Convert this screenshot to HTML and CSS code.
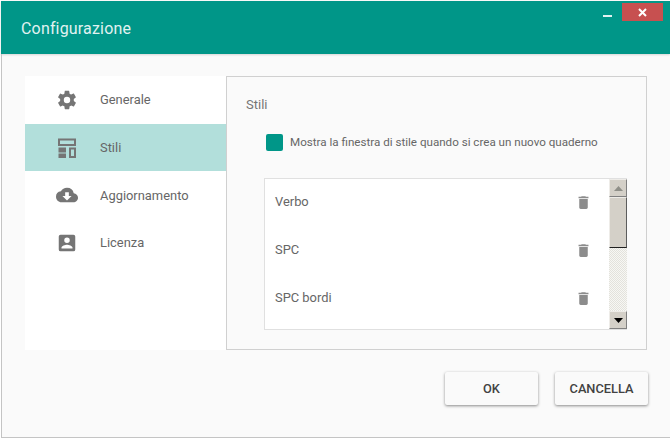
FILE: index.html
```html
<!DOCTYPE html>
<html lang="it">
<head>
<meta charset="utf-8">
<title>Configurazione</title>
<link rel="stylesheet" href="styles.css">
</head>
<body>
<div class="window">
  <header class="titlebar">
    <h1 class="title">Configurazione</h1>
    <div class="controls">
      <span class="minimize"></span>
      <span class="close">
        <svg width="9" height="9" viewBox="0 0 9 9"><path d="M1 1l7 7M8 1l-7 7" stroke="#fff" stroke-width="2" fill="none"/></svg>
      </span>
    </div>
  </header>
  <main class="content">
    <div class="columns">
      <nav class="sidebar">
        <div class="nav-item">
          <svg class="nav-icon" width="22" height="22" viewBox="0 0 24 24"><path fill="#757575" d="M19.4 13c.04-.32.07-.66.07-1s-.03-.68-.07-1l2.11-1.65c.19-.15.24-.42.12-.64l-2-3.46c-.12-.22-.39-.3-.61-.22l-2.49 1c-.52-.4-1.08-.73-1.69-.98l-.38-2.65A.49.49 0 0 0 14 2h-4c-.25 0-.46.18-.49.42l-.38 2.65c-.61.25-1.17.59-1.69.98l-2.49-1c-.23-.09-.49 0-.61.22l-2 3.46c-.13.22-.07.49.12.64L4.57 11c-.04.32-.07.67-.07 1s.03.68.07 1l-2.11 1.65c-.19.15-.24.42-.12.64l2 3.46c.12.22.39.3.61.22l2.49-1c.52.4 1.08.73 1.69.98l.38 2.65c.03.24.24.42.49.42h4c.25 0 .46-.18.49-.42l.38-2.65c.61-.25 1.17-.59 1.69-.98l2.49 1c.23.09.49 0 .61-.22l2-3.46c.12-.22.07-.49-.12-.64L19.4 13zM12 15.500a3.500 3.500 0 1 1 0-7 3.500 3.500 0 0 1 0 7z"/></svg>
          <span class="nav-label">Generale</span>
        </div>
        <div class="nav-item active">
          <svg class="nav-icon" width="22" height="22" viewBox="0 0 22 22"><path fill="#757575" fill-rule="evenodd" d="M2 1.500h18v7.500H2zM4 3.500v3.500h14V3.500zM2.500 10.500H10v5H2.500zM2.500 16.500H10V21H2.500zM13 10.500h7V21h-7zM15 12.500V19h3v-6.500z"/></svg>
          <span class="nav-label">Stili</span>
        </div>
        <div class="nav-item">
          <svg class="nav-icon" width="22" height="22" viewBox="0 0 24 24"><path fill="#757575" d="M19.35 10.04A7.49 7.49 0 0 0 12 4a7.48 7.48 0 0 0-6.65 4.04A5.99 5.99 0 0 0 0 14c0 3.31 2.69 6 6 6h13c2.76 0 5-2.24 5-5 0-2.64-2.05-4.78-4.65-4.96zM17 13l-5 5-5-5h3V9h4v4h3z"/></svg>
          <span class="nav-label">Aggiornamento</span>
        </div>
        <div class="nav-item">
          <svg class="nav-icon" width="22" height="22" viewBox="0 0 24 24"><path fill="#757575" d="M3 5v14a2 2 0 0 0 2 2h14a2 2 0 0 0 2-2V5a2 2 0 0 0-2-2H5a2 2 0 0 0-2 2zm12 4a3 3 0 1 1-6 0 3 3 0 0 1 6 0zm-9 8c0-2 4-3.100 6-3.100s6 1.100 6 3.100v1H6v-1z"/></svg>
          <span class="nav-label">Licenza</span>
        </div>
      </nav>
      <section class="panel">
        <h2 class="panel-title">Stili</h2>
        <div class="check-row">
          <span class="checkbox"></span>
          <span class="check-label">Mostra la finestra di stile quando si crea un nuovo quaderno</span>
        </div>
        <div class="list-box">
          <ul class="list">
            <li class="list-row"><span>Verbo</span><svg class="trash" width="17" height="17" viewBox="0 0 24 24"><path fill="#8c8c8c" d="M6 19c0 1.100.9 2 2 2h8c1.100 0 2-.9 2-2V7H6v12zM19 4h-3.500l-1-1h-5l-1 1H5v2h14V4z"/></svg></li>
            <li class="list-row"><span>SPC</span><svg class="trash" width="17" height="17" viewBox="0 0 24 24"><path fill="#8c8c8c" d="M6 19c0 1.100.9 2 2 2h8c1.100 0 2-.9 2-2V7H6v12zM19 4h-3.500l-1-1h-5l-1 1H5v2h14V4z"/></svg></li>
            <li class="list-row"><span>SPC bordi</span><svg class="trash" width="17" height="17" viewBox="0 0 24 24"><path fill="#8c8c8c" d="M6 19c0 1.100.9 2 2 2h8c1.100 0 2-.9 2-2V7H6v12zM19 4h-3.500l-1-1h-5l-1 1H5v2h14V4z"/></svg></li>
          </ul>
          <div class="scrollbar">
            <div class="sb-btn"><svg width="9" height="5" viewBox="0 0 9 5"><path d="M4.500 0L9 5H0z" fill="#8f8f88"/></svg></div>
            <div class="sb-thumb"></div>
            <div class="sb-track"></div>
            <div class="sb-btn"><svg width="9" height="5" viewBox="0 0 9 5"><path d="M0 0h9L4.500 5z" fill="#000"/></svg></div>
          </div>
        </div>
      </section>
    </div>
    <footer class="actions">
      <button class="btn">OK</button>
      <button class="btn">CANCELLA</button>
    </footer>
  </main>
</div>
</body>
</html>
```

FILE: styles.css
```css
* { box-sizing: border-box; }
html, body { margin: 0; padding: 0; width: 670px; height: 439px; overflow: hidden; background: #fff; }
body { font-family: Roboto, "Noto Sans", sans-serif; color: #616161; }

.window {
  width: 669px;
  height: 438px;
  margin-left: 1px;
  border-bottom: 1px solid #c4c4c4;
  background: #fafafa;
  display: flex;
  flex-direction: column;
}

.titlebar {
  height: 53px;
  margin-top: 1px;
  background: #009688;
  display: flex;
  justify-content: space-between;
  padding: 2px 7px 0 20px;
  box-shadow: 0 1px 2px rgba(0,0,0,.15);
  flex: none;
}
.title { margin: 15px 0 0; font-size: 16px; line-height: 22px; font-weight: 400; color: #e0f2f1; letter-spacing: .17px; }
.controls { display: flex; align-items: flex-start; gap: 10px; }
.minimize { width: 9px; height: 2px; margin-top: 12px; background: #e0f2f1; }
.close {
  width: 41px; height: 18px; background: #c75050;
  display: flex; align-items: center; justify-content: center;
}

.content {
  flex: 1;
  display: flex;
  flex-direction: column;
  border-left: 1px solid #c4c4c4;
  padding: 22px 22px 0 23px;
}
.columns { display: flex; height: 274px; }

.sidebar { width: 201px; background: #fff; flex: none; }
.nav-item { height: 47.7px; display: flex; align-items: center; padding-left: 31px; }
.nav-item.active { background: #b2dfdb; }
.nav-icon { flex: none; }
.nav-label { margin-left: 22px; font-size: 12.9px; color: #666; }

.panel {
  width: 421px;
  border: 1px solid #d0d0d0;
  padding: 19px;
  background: #fafafa;
}
.panel-title { margin: 0; font-size: 13px; line-height: 18px; font-weight: 400; color: #757575; }
.check-row { display: flex; align-items: center; margin: 19px 0 0 20px; height: 18px; }
.checkbox { width: 17px; height: 17px; background: #009688; border-radius: 2px; flex: none; }
.check-label { margin-left: 7px; font-size: 11.62px; color: #666; white-space: nowrap; }

.list-box {
  display: flex;
  width: 363px;
  height: 152px;
  margin: 27px 0 0 18px;
  background: #fff;
  border: 1px solid #e0e0e0;
}
.list { flex: 1; list-style: none; margin: 0; padding: 0; }
.list-row { height: 48px; display: flex; align-items: center; justify-content: space-between; padding: 0 17px 4px 10px; font-size: 12.9px; color: #666; }
.trash { flex: none; margin-top: 2px; }

.scrollbar { width: 18px; margin-right: -1px; display: flex; flex-direction: column; flex: none; }
.sb-btn {
  height: 18px; flex: none; background: #d4d0c8;
  border: 1px solid; border-color: #eeece8 #808080 #808080 #eeece8;
  display: flex; align-items: center; justify-content: center;
}
.sb-thumb {
  height: 51px; flex: none; background: #d4d0c8;
  border: 1px solid; border-color: #eeece8 #5c5c5c #202020 #eeece8;
}
.sb-track {
  flex: 1;
  background-color: #f0efeb;
  background-image: repeating-conic-gradient(#e3e2dc 0 25%, #f7f7f4 0 50%);
  background-size: 2px 2px;
}

.actions { display: flex; justify-content: flex-end; gap: 17px; margin-top: 22px; }
.btn {
  width: 93px; height: 33px; padding: 0;
  border: 0; border-radius: 2px; background: #fafafa;
  box-shadow: 0 1px 3px rgba(0,0,0,.45);
  font-family: Roboto, sans-serif; font-size: 12.8px; font-weight: 500; color: #424242;
}
```
